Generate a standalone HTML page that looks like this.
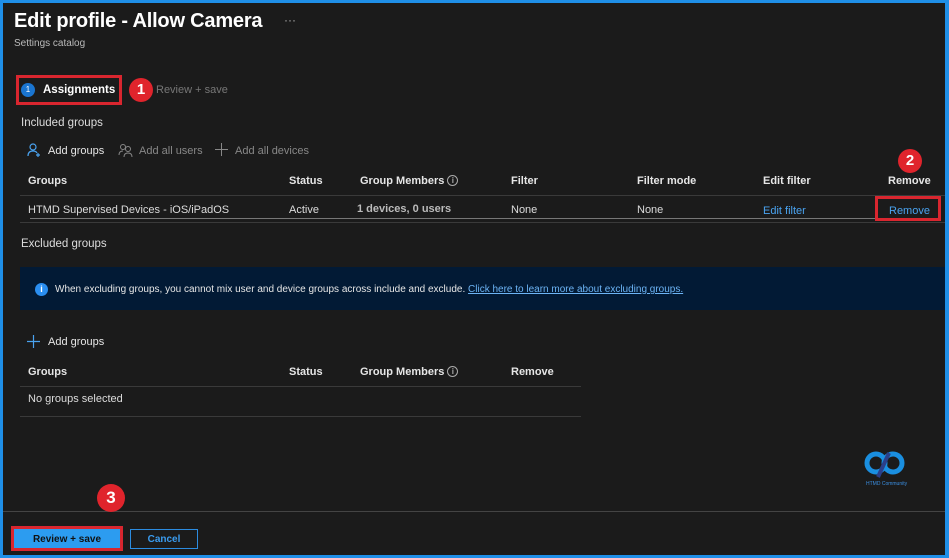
<!DOCTYPE html>
<html><head><meta charset="utf-8"><style>
*{margin:0;padding:0;box-sizing:border-box}
body{width:949px;height:558px;background:#1f8fe8;position:relative;overflow:hidden;font-family:"Liberation Sans",sans-serif;color:#e8e8e8}
#m{position:absolute;left:3px;top:3px;width:942px;height:552px;background:#1b1b1b}
.a{position:absolute;white-space:nowrap}
.h{font-size:11px;font-weight:bold;color:#e6e6e6}
.t{font-size:11px;color:#dcdcdc}
.ln{position:absolute;height:1px;background:#3a3a3a}
.red{position:absolute;border:3px solid #d9262f}
.badge{position:absolute;width:24px;height:24px;border-radius:50%;background:#e0242c;color:#fff;font-weight:bold;font-size:15px;text-align:center;line-height:24px}
.lk{color:#4aa3f0}
.ic{display:inline-block;width:11px;height:11px;border:1px solid #aaa;border-radius:50%;font-size:8px;text-align:center;line-height:9px;vertical-align:1px;color:#aaa;margin-left:3px}
</style></head><body><div id="m"></div>
<div class="a" style="left:14px;top:10px;font-size:20px;font-weight:bold;color:#fff;letter-spacing:-0.2px">Edit profile - Allow Camera</div>
<div class="a" style="left:284px;top:13px;font-size:12px;color:#aaa">···</div>
<div class="a" style="left:14px;top:38px;font-size:10px;color:#bbb">Settings catalog</div>
<div class="red" style="left:16px;top:75px;width:106px;height:30px"></div>
<div class="a" style="left:21px;top:83px;width:14px;height:14px;border-radius:50%;background:#1a75d0;color:#fff;font-size:8px;text-align:center;line-height:14px">1</div>
<div class="a" style="left:43px;top:84px;font-size:11.5px;font-weight:bold;color:#fff">Assignments</div>
<div class="badge" style="left:129px;top:78px">1</div>
<div class="a" style="left:156px;top:84px;font-size:11px;color:#777">Review + save</div>
<div class="a" style="left:21px;top:117px;font-size:11.5px;color:#ddd">Included groups</div>
<svg class="a" style="left:27px;top:143px" width="14" height="14" viewBox="0 0 14 14"><circle cx="6" cy="4" r="3" fill="none" stroke="#4aa3f0" stroke-width="1.2"/><path d="M1 13 Q1 8 6 8 Q9 8 10 10" fill="none" stroke="#4aa3f0" stroke-width="1.2"/><path d="M11 10v4M9 12h4" stroke="#4aa3f0" stroke-width="1.2"/></svg>
<div class="a" style="left:48px;top:145px;font-size:11px;color:#e6e6e6">Add groups</div>
<svg class="a" style="left:118px;top:143px" width="16" height="14" viewBox="0 0 16 14"><circle cx="5" cy="4" r="2.5" fill="none" stroke="#888"/><circle cx="10" cy="6" r="2.5" fill="none" stroke="#888"/><path d="M1 12Q1 8 5 8M6 14Q6 10 10 10Q14 10 14 14" fill="none" stroke="#888"/></svg>
<div class="a" style="left:139px;top:145px;font-size:11px;color:#888">Add all users</div>
<svg class="a" style="left:215px;top:143px" width="13" height="13"><path d="M6.5 0v13M0 6.5h13" stroke="#888"/></svg>
<div class="a" style="left:235px;top:145px;font-size:11px;color:#888">Add all devices</div>
<div class="badge" style="left:898px;top:149px">2</div>
<div class="a h" style="left:28px;top:175px">Groups</div>
<div class="a h" style="left:289px;top:175px">Status</div>
<div class="a h" style="left:360px;top:175px">Group Members<span class="ic">i</span></div>
<div class="a h" style="left:511px;top:175px">Filter</div>
<div class="a h" style="left:637px;top:175px">Filter mode</div>
<div class="a h" style="left:763px;top:175px">Edit filter</div>
<div class="a h" style="left:888px;top:175px">Remove</div>
<div class="ln" style="left:20px;top:195px;width:925px"></div>
<div class="a t" style="left:28px;top:204px">HTMD Supervised Devices - iOS/iPadOS</div>
<div class="a t" style="left:289px;top:204px">Active</div>
<div class="a t" style="left:357px;top:203px;font-weight:bold;color:#bbb">1 devices, 0 users</div>
<div class="a t" style="left:511px;top:204px">None</div>
<div class="a t" style="left:637px;top:204px">None</div>
<div class="a t lk" style="left:763px;top:205px">Edit filter</div>
<div class="a t lk" style="left:889px;top:205px">Remove</div>
<div class="red" style="left:875px;top:196px;width:66px;height:25px"></div>
<div class="ln" style="left:30px;top:218px;width:845px;background:#777"></div>
<div class="ln" style="left:20px;top:222px;width:925px"></div>
<div class="a" style="left:21px;top:238px;font-size:11.5px;color:#ddd">Excluded groups</div>
<div class="a" style="left:20px;top:267px;width:925px;height:43px;background:#021a35"></div>
<div class="a" style="left:35px;top:283px;width:13px;height:13px;border-radius:50%;background:#2a8ef0;color:#fff;font-size:9px;font-weight:bold;text-align:center;line-height:13px">i</div>
<div class="a" style="left:55px;top:284px;font-size:10px;color:#e6e6e6">When excluding groups, you cannot mix user and device groups across include and exclude. <span style="color:#6cb4f5;text-decoration:underline">Click here to learn more about excluding groups.</span></div>
<svg class="a" style="left:27px;top:335px" width="13" height="13"><path d="M6.5 0v13M0 6.5h13" stroke="#4aa3f0" stroke-width="1.2"/></svg>
<div class="a" style="left:48px;top:336px;font-size:11px;color:#e6e6e6">Add groups</div>
<div class="a h" style="left:28px;top:366px">Groups</div>
<div class="a h" style="left:289px;top:366px">Status</div>
<div class="a h" style="left:360px;top:366px">Group Members<span class="ic">i</span></div>
<div class="a h" style="left:511px;top:366px">Remove</div>
<div class="ln" style="left:20px;top:386px;width:561px"></div>
<div class="a t" style="left:28px;top:393px">No groups selected</div>
<div class="ln" style="left:20px;top:416px;width:561px"></div>
<svg class="a" style="left:864px;top:449px" width="42" height="30" viewBox="0 0 42 30"><circle cx="12" cy="14" r="9" fill="none" stroke="#1a8fe0" stroke-width="5"/><circle cx="29" cy="14" r="9" fill="none" stroke="#1a8fe0" stroke-width="5"/><path d="M14 28 L25 4" stroke="#2a3f8a" stroke-width="4"/></svg>
<div class="a" style="left:866px;top:481px;font-size:5px;color:#3a8ee0">HTMD Community</div>
<div class="ln" style="left:3px;top:511px;width:942px;background:#444"></div>
<div class="badge" style="left:97px;top:484px;width:28px;height:28px;line-height:28px;font-size:17px">3</div>
<div class="red" style="left:11px;top:526px;width:112px;height:25px"></div>
<div class="a" style="left:14px;top:529px;width:106px;height:19px;background:#2c9cf0;color:#111;font-size:10px;font-weight:bold;text-align:center;line-height:21px">Review + save</div>
<div class="a" style="left:130px;top:529px;width:68px;height:20px;border:1px solid #2c8ce0;color:#3a9cf0;font-size:10px;font-weight:bold;text-align:center;line-height:20px">Cancel</div>
</body></html>
